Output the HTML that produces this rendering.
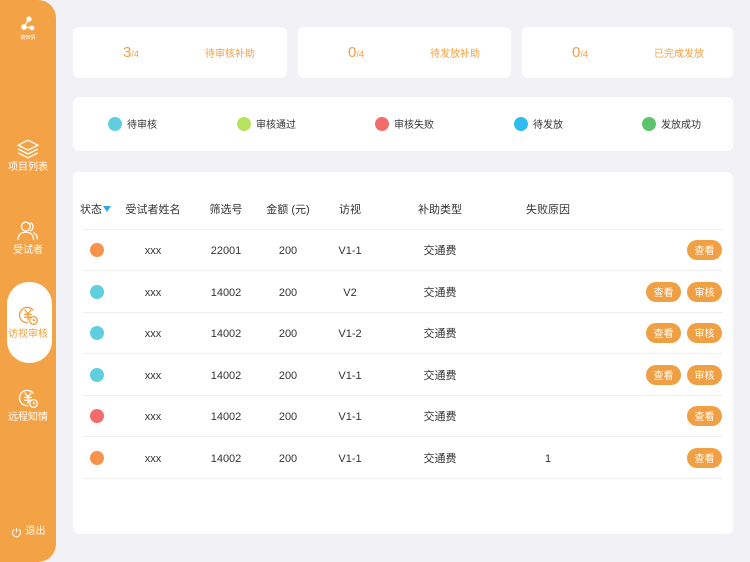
<!DOCTYPE html>
<html><head><meta charset="utf-8"><style>
*{margin:0;padding:0;box-sizing:border-box}
body{width:750px;height:562px;background:#f2f1f5;font-family:"Liberation Sans","Noto Sans CJK SC",sans-serif;position:relative;overflow:hidden;color:#333}
.side{position:absolute;left:0;top:0;width:56px;height:562px;background:#f3a245;border-radius:0 18px 18px 0}
.nav{position:absolute;left:0;width:56px;text-align:center;color:#fff;font-size:10px;line-height:12px}
.nav svg{display:block;margin:0 auto 3px}
.pill{position:absolute;left:7px;top:282px;width:45px;height:81px;background:#fff;border-radius:22px}
.card{position:absolute;background:#fff;border-radius:6px}
.stat{top:27px;height:51px;color:#f0a044;font-size:10px}
.stat .n{position:absolute;left:50px;top:17px;font-size:15px;line-height:18px}
.stat .n small{font-size:9px}
.stat .l{position:absolute;left:132px;top:22px;line-height:12px}
.leg{position:absolute;top:20px;font-size:10px;color:#333;display:flex;align-items:center;line-height:14px}
.leg span{position:relative;top:2px}
.leg i{width:14px;height:14px;border-radius:50%;display:inline-block;margin-right:5px}
.th{position:absolute;top:203px;font-size:11px;line-height:14px;color:#333;transform:translateX(-50%);white-space:nowrap}
.line{position:absolute;left:83px;width:640px;height:1px;background:#eee}
.c{position:absolute;font-size:11px;line-height:14px;height:14px;color:#333;transform:translateX(-50%);white-space:nowrap}
.dot{position:absolute;width:14px;height:14px;border-radius:50%}
.btn{position:absolute;width:35px;height:20px;border-radius:10px;background:#f0a044;color:#fff;font-size:10px;text-align:center;line-height:17px;padding-top:3px}
</style></head><body>
<div class="side">
<div class="nav" style="top:16px;font-size:5px;line-height:6px">
<svg width="16" height="16" viewBox="0 0 16 16" fill="#fff"><circle cx="9" cy="3" r="2.6"/><circle cx="4" cy="11" r="2.8"/><circle cx="12" cy="12" r="2.4"/><path d="M8 5L5 9M6.5 11.5H10" stroke="#fff" stroke-width="1.4"/></svg>链知情</div>
<div class="nav" style="top:139px"><svg width="22" height="20" viewBox="0 0 20 18" fill="none" stroke="#fff" stroke-width="1.2"><path d="M10 1L19 5.5 10 10 1 5.5Z"/><path d="M1 9L10 13.5 19 9"/><path d="M1 12.5L10 17 19 12.5"/></svg>项目列表</div>
<div class="nav" style="top:220px"><svg width="22" height="22" viewBox="0 0 20 20" fill="none" stroke="#fff" stroke-width="1.2"><circle cx="8" cy="6" r="4"/><path d="M1 18c0-5 3-7 7-7s7 2 7 7"/><path d="M12 2.5a4 4 0 010 7.5M15 11.5c2 1 3.5 3 3.5 6"/></svg>受试者</div>
<div class="pill"></div>
<div class="nav" style="top:304px;color:#f0a044"><svg width="22" height="22" viewBox="0 0 20 20" fill="none" stroke="#f0a044" stroke-width="1.2"><path d="M15 6A7 7 0 1010 17"/><path d="M7 5l3 4 3-4M6.5 9.5h7M6.5 12h7M10 9v6"/><circle cx="15" cy="15" r="3.5"/><path d="M15 13.3V15h1.5"/></svg>访视审核</div>
<div class="nav" style="top:387px"><svg width="22" height="22" viewBox="0 0 20 20" fill="none" stroke="#fff" stroke-width="1.2"><path d="M15 6A7 7 0 1010 17"/><path d="M7 5l3 4 3-4M6.5 9.5h7M6.5 12h7M10 9v6"/><circle cx="15" cy="15" r="3.5"/><path d="M15 13.3V15h1.5"/></svg>远程知情</div>
<div class="nav" style="top:526px;font-size:10px"><span style="display:inline-flex;align-items:center;gap:4px"><svg width="11" height="11" viewBox="0 0 11 11" fill="none" stroke="#fff" stroke-width="1.1" style="margin:0"><path d="M3.2 2.5a4 4 0 104.6 0"/><path d="M5.5 1v4.2"/></svg>退出</span></div>
</div>

<div class="card stat" style="left:73px;width:214px"><div class="n">3<small>/4</small></div><div class="l">待审核补助</div></div>
<div class="card stat" style="left:298px;width:213px"><div class="n">0<small>/4</small></div><div class="l">待发放补助</div></div>
<div class="card stat" style="left:522px;width:211px"><div class="n">0<small>/4</small></div><div class="l">已完成发放</div></div>

<div class="card" style="left:73px;top:97px;width:660px;height:54px">
<div class="leg" style="left:35px"><i style="background:#5fcfe0"></i><span>待审核</span></div>
<div class="leg" style="left:164px"><i style="background:#b3e35f"></i><span>审核通过</span></div>
<div class="leg" style="left:302px"><i style="background:#f36b6b"></i><span>审核失败</span></div>
<div class="leg" style="left:441px"><i style="background:#2ebcf0"></i><span>待发放</span></div>
<div class="leg" style="left:569px"><i style="background:#5cc46d"></i><span>发放成功</span></div>
</div>

<div class="card" style="left:73px;top:172px;width:660px;height:362px"></div>
<div class="th" style="left:91px">状态</div>
<svg style="position:absolute;left:103px;top:206px" width="8" height="6"><path d="M0 0H8L4 6Z" fill="#2ea8e8"/></svg>
<div class="th" style="left:153px">受试者姓名</div>
<div class="th" style="left:226px">筛选号</div>
<div class="th" style="left:288px">金额 (元)</div>
<div class="th" style="left:350px">访视</div>
<div class="th" style="left:440px">补助类型</div>
<div class="th" style="left:548px">失败原因</div>

<div class="line" style="top:229px"></div>
<div class="line" style="top:270px"></div>
<div class="line" style="top:312px"></div>
<div class="line" style="top:353px"></div>
<div class="line" style="top:395px"></div>
<div class="line" style="top:436px"></div>
<div class="line" style="top:478px"></div>

<div class="dot" style="left:90px;top:243px;background:#f7924a"></div>
<div class="c" style="left:153px;top:244px">xxx</div><div class="c" style="left:226px;top:244px">22001</div><div class="c" style="left:288px;top:244px">200</div><div class="c" style="left:350px;top:244px">V1-1</div><div class="c" style="left:440px;top:244px">交通费</div>
<div class="btn" style="left:687px;top:240px">查看</div>

<div class="dot" style="left:90px;top:285px;background:#5fcfe0"></div>
<div class="c" style="left:153px;top:286px">xxx</div><div class="c" style="left:226px;top:286px">14002</div><div class="c" style="left:288px;top:286px">200</div><div class="c" style="left:350px;top:286px">V2</div><div class="c" style="left:440px;top:286px">交通费</div>
<div class="btn" style="left:646px;top:282px">查看</div><div class="btn" style="left:687px;top:282px">审核</div>

<div class="dot" style="left:90px;top:326px;background:#5fcfe0"></div>
<div class="c" style="left:153px;top:327px">xxx</div><div class="c" style="left:226px;top:327px">14002</div><div class="c" style="left:288px;top:327px">200</div><div class="c" style="left:350px;top:327px">V1-2</div><div class="c" style="left:440px;top:327px">交通费</div>
<div class="btn" style="left:646px;top:323px">查看</div><div class="btn" style="left:687px;top:323px">审核</div>

<div class="dot" style="left:90px;top:368px;background:#5fcfe0"></div>
<div class="c" style="left:153px;top:369px">xxx</div><div class="c" style="left:226px;top:369px">14002</div><div class="c" style="left:288px;top:369px">200</div><div class="c" style="left:350px;top:369px">V1-1</div><div class="c" style="left:440px;top:369px">交通费</div>
<div class="btn" style="left:646px;top:365px">查看</div><div class="btn" style="left:687px;top:365px">审核</div>

<div class="dot" style="left:90px;top:409px;background:#f36b6b"></div>
<div class="c" style="left:153px;top:410px">xxx</div><div class="c" style="left:226px;top:410px">14002</div><div class="c" style="left:288px;top:410px">200</div><div class="c" style="left:350px;top:410px">V1-1</div><div class="c" style="left:440px;top:410px">交通费</div>
<div class="btn" style="left:687px;top:406px">查看</div>

<div class="dot" style="left:90px;top:451px;background:#f7924a"></div>
<div class="c" style="left:153px;top:452px">xxx</div><div class="c" style="left:226px;top:452px">14002</div><div class="c" style="left:288px;top:452px">200</div><div class="c" style="left:350px;top:452px">V1-1</div><div class="c" style="left:440px;top:452px">交通费</div><div class="c" style="left:548px;top:452px">1</div>
<div class="btn" style="left:687px;top:448px">查看</div>
</body></html>
